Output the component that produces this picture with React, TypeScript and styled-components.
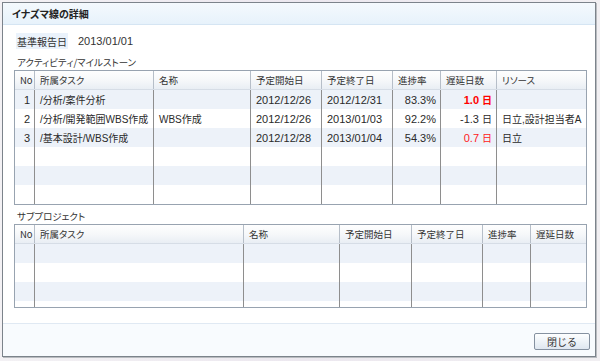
import React from "react";
import styled, { createGlobalStyle } from "styled-components";

const GlobalStyle = createGlobalStyle`
  html, body { margin: 0; padding: 0; }
  body {
    background: #efedf1;
    font-family: "Liberation Sans", "Noto Sans CJK JP", sans-serif;
    color: #1e1e1e;
    font-feature-settings: "palt";
  }
`;

const Backdrop = styled.div`
  width: 600px;
  height: 361px;
  box-sizing: border-box;
  padding: 2px 4px 4px 2px;
  background: linear-gradient(90deg, #f3f1f4 0%, #ece8ef 50%, #f1eff2 100%);
`;

const Dialog = styled.div`
  width: 594px;
  height: 355px;
  box-sizing: border-box;
  border: 1px solid #7c838b;
  background: #ffffff;
  display: flex;
  flex-direction: column;
  box-shadow: 1px 1px 0 #b9bcc0;
`;

const TitleBar = styled.div`
  height: 22px;
  box-sizing: border-box;
  border-bottom: 1px solid #d5e5f3;
  background: linear-gradient(#f4f9fd, #e7f2fb);
  display: flex;
  align-items: center;
  padding-left: 9px;
  font-family: "Noto Sans CJK JP", sans-serif;
  font-size: 10px;
  font-weight: 700;
  color: #222;
`;

const Body = styled.div`
  flex: 1;
  padding: 0 8px 0 11px;
  display: flex;
  flex-direction: column;
`;

const DateRow = styled.div`
  display: flex;
  align-items: center;
  margin-top: 8px;
  margin-left: 2px;
  height: 16px;
`;

const FieldLabel = styled.div`
  height: 16px;
  width: 52px;
  box-sizing: border-box;
  background: #eaf2fb;
  display: flex;
  align-items: center;
  justify-content: center;
  font-family: "Noto Sans CJK JP", sans-serif;
  font-size: 10px;
  color: #333;
`;

const FieldValue = styled.div`
  margin-left: 10px;
  font-size: 11px;
  color: #333;
`;

const SectionLabel = styled.div<{ $top: number }>`
  height: ${(p) => 21 - (5 - p.$top)}px;
  box-sizing: border-box;
  padding-top: ${(p) => p.$top}px;
  line-height: 16px;
  font-family: "Noto Sans CJK JP", sans-serif;
  font-size: 9.5px;
  color: #333;
  padding-left: 3px;
`;

const Grid = styled.div<{ $height: number }>`
  border: 1px solid #98a3b0;
  height: ${(p) => p.$height}px;
  overflow: hidden;
  box-sizing: content-box;
`;

const Row = styled.div<{ $cols: string; $alt?: boolean }>`
  display: grid;
  grid-template-columns: ${(p) => p.$cols};
  height: 19px;
  background: ${(p) => (p.$alt ? "#edf2f9" : "#ffffff")};
`;

const HeadRow = styled(Row)`
  height: 19px;
  box-sizing: border-box;
  background: linear-gradient(#fefefe 0%, #f6f8fa 50%, #e9eef4 100%);
  border-bottom: 1px solid #d6dde6;
`;

const HeadCell = styled.div`
  box-sizing: border-box;
  border-right: 1px solid #b6bec8;
  padding-left: 5px;
  display: flex;
  align-items: center;
  font-family: "Noto Sans CJK JP", sans-serif;
  font-size: 9.5px;
  color: #333;
  white-space: nowrap;
  overflow: hidden;
  &:last-child { border-right: none; }
`;

const Cell = styled.div<{ $num?: boolean; $right?: boolean; $color?: string; $bold?: boolean }>`
  box-sizing: border-box;
  border-right: 1px solid #8e8e8e;
  padding: 0 4px 0 5px;
  display: flex;
  align-items: center;
  justify-content: ${(p) => (p.$right ? "flex-end" : "flex-start")};
  font-size: ${(p) => (p.$num ? "11px" : "10px")};
  color: ${(p) => p.$color || "#2a2a2a"};
  font-weight: ${(p) => (p.$bold ? 700 : 400)};
  white-space: nowrap;
  overflow: hidden;
  &:last-child { border-right: none; }
`;

const Unit = styled.span`
  font-family: "Noto Sans CJK JP", sans-serif;
  font-size: 10px;
  margin-left: 3px;
`;

const Footer = styled.div`
  height: 33px;
  box-sizing: border-box;
  border-top: 1px solid #e0e9f3;
  background: #f8fbfe;
  display: flex;
  justify-content: flex-end;
  align-items: flex-start;
  padding: 9px 5px 0 0;
`;

const Button = styled.button`
  width: 56px;
  height: 17px;
  box-sizing: border-box;
  border: 1px solid #8591a0;
  border-radius: 2px;
  background: linear-gradient(#fdfeff 0%, #eef3f8 50%, #dfe7f0 100%);
  font-family: "Noto Sans CJK JP", sans-serif;
  font-size: 10px;
  color: #333;
  padding: 0;
  line-height: 14px;
  cursor: pointer;
`;

const cols1 = "20px 119px 97px 71px 71px 48px 56px 89px";
const cols2 = "20px 209px 96px 72px 71px 48px 55px";

type Act = {
  no: string;
  task: string;
  name: string;
  start: string;
  end: string;
  rate: string;
  delay: string;
  delayColor?: string;
  bold?: boolean;
  res: string;
};

const activities: Act[] = [
  { no: "1", task: "/分析/案件分析", name: "", start: "2012/12/26", end: "2012/12/31", rate: "83.3%", delay: "1.0", delayColor: "#ff0000", bold: true, res: "" },
  { no: "2", task: "/分析/開発範囲WBS作成", name: "WBS作成", start: "2012/12/26", end: "2013/01/03", rate: "92.2%", delay: "-1.3", res: "日立,設計担当者A" },
  { no: "3", task: "/基本設計/WBS作成", name: "", start: "2012/12/28", end: "2013/01/04", rate: "54.3%", delay: "0.7", delayColor: "#ff2020", res: "日立" },
];

const head1 = ["No", "所属タスク", "名称", "予定開始日", "予定終了日", "進捗率", "遅延日数", "リソース"];
const head2 = ["No", "所属タスク", "名称", "予定開始日", "予定終了日", "進捗率", "遅延日数"];

export default function App() {
  const emptyRows1 = [3, 4, 5];
  const rows2 = [0, 1, 2, 3];
  return (
    <>
      <GlobalStyle />
      <Backdrop>
        <Dialog>
          <TitleBar>イナズマ線の詳細</TitleBar>
          <Body>
            <DateRow>
              <FieldLabel>基準報告日</FieldLabel>
              <FieldValue>2013/01/01</FieldValue>
            </DateRow>
            <SectionLabel $top={5}>アクティビティ/マイルストーン</SectionLabel>
            <Grid $height={133}>
              <HeadRow $cols={cols1}>
                {head1.map((h) => (
                  <HeadCell key={h}>{h}</HeadCell>
                ))}
              </HeadRow>
              {activities.map((a, i) => (
                <Row key={a.no} $cols={cols1} $alt={i % 2 === 0}>
                  <Cell $num $right>{a.no}</Cell>
                  <Cell>{a.task}</Cell>
                  <Cell>{a.name}</Cell>
                  <Cell $num>{a.start}</Cell>
                  <Cell $num>{a.end}</Cell>
                  <Cell $num $right>{a.rate}</Cell>
                  <Cell $num $right $color={a.delayColor} $bold={a.bold}>
                    {a.delay}
                    <Unit>日</Unit>
                  </Cell>
                  <Cell>{a.res}</Cell>
                </Row>
              ))}
              {emptyRows1.map((i) => (
                <Row key={i} $cols={cols1} $alt={i % 2 === 0}>
                  {head1.map((h) => (
                    <Cell key={h} />
                  ))}
                </Row>
              ))}
            </Grid>
            <SectionLabel $top={3}>サブプロジェクト</SectionLabel>
            <Grid $height={82}>
              <HeadRow $cols={cols2}>
                {head2.map((h) => (
                  <HeadCell key={h}>{h}</HeadCell>
                ))}
              </HeadRow>
              {rows2.map((i) => (
                <Row key={i} $cols={cols2} $alt={i % 2 === 0}>
                  {head2.map((h) => (
                    <Cell key={h} />
                  ))}
                </Row>
              ))}
            </Grid>
          </Body>
          <Footer>
            <Button>閉じる</Button>
          </Footer>
        </Dialog>
      </Backdrop>
    </>
  );
}
